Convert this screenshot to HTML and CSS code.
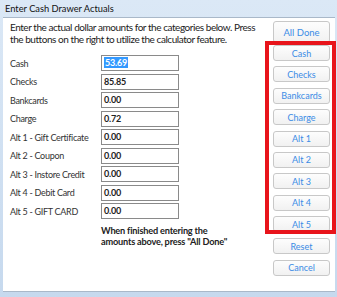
FILE: index.html
```html
<!DOCTYPE html>
<html lang="en">
<head>
<meta charset="UTF-8">
<title>Enter Cash Drawer Actuals</title>
<link rel="stylesheet" href="styles.css">
</head>
<body>

<div class="window">
    <div class="titlebar">Enter Cash Drawer Actuals</div>
    <div class="content">
        <div class="main">
            <p class="intro">Enter the actual dollar amounts for the categories below. Press<br>the buttons on the right to utilize the calculator feature.</p>
            <div class="fields">
                <div class="row"><span class="label">Cash</span><div class="box"><span class="selected">53.69</span></div></div>
                <div class="row"><span class="label">Checks</span><div class="box">85.85</div></div>
                <div class="row"><span class="label">Bankcards</span><div class="box">0.00</div></div>
                <div class="row"><span class="label">Charge</span><div class="box">0.72</div></div>
                <div class="row"><span class="label">Alt 1 - Gift Certificate</span><div class="box">0.00</div></div>
                <div class="row"><span class="label">Alt 2 - Coupon</span><div class="box">0.00</div></div>
                <div class="row"><span class="label">Alt 3 - Instore Credit</span><div class="box">0.00</div></div>
                <div class="row"><span class="label">Alt 4 - Debit Card</span><div class="box">0.00</div></div>
                <div class="row"><span class="label">Alt 5 - GIFT CARD</span><div class="box">0.00</div></div>
            </div>
            <p class="note">When finished entering the<br>amounts above, press "All Done"</p>
        </div>
        <div class="actions">
            <button class="btn done">All Done</button>
            <div class="calc">
                <button class="btn">Cash</button>
                <button class="btn">Checks</button>
                <button class="btn">Bankcards</button>
                <button class="btn">Charge</button>
                <button class="btn">Alt 1</button>
                <button class="btn">Alt 2</button>
                <button class="btn">Alt 3</button>
                <button class="btn">Alt 4</button>
                <button class="btn">Alt 5</button>
            </div>
            <button class="btn reset">Reset</button>
            <button class="btn">Cancel</button>
        </div>
    </div>
    <!-- red annotation frame round the calculator buttons -->
    <div class="highlight"></div>
</div>

</body>
</html>
```

FILE: styles.css
```css
/* window */
body {
    margin: 0;
    font-family: Lato, "Open Sans", sans-serif;
    background: #c9dcf0;
}
.window {
    position: relative;
    width: 337px;
    height: 297px;
    background: linear-gradient(#dbe8f6, #c6d9ee);
    padding: 0 2px 0 3px;
    box-sizing: border-box;
}
.titlebar {
    height: 16px;
    line-height: 17px;
    font-size: 9.3px;
    color: #111;
    padding-left: 2px;
}
.content {
    display: flex;
    height: 273px;
    margin-top: 1px;
    background: #fff;
    border-top: 1px solid #a9b8c9;
    border-bottom: 1px solid #a9b8c9;
}

/* left side */
.main {
    flex: 1;
    padding-left: 7px;
}
.intro {
    margin: 3px 0 0;
    font-size: 10px;
    letter-spacing: -0.45px;
    line-height: 12px;
    white-space: nowrap;
    color: #222;
}
.fields {
    margin-top: 10px;
}
.row {
    display: flex;
    align-items: center;
    height: 16px;
    margin-bottom: 2.5px;
}
.label {
    width: 91px;
    font-size: 9px;
    letter-spacing: -0.3px;
    color: #333;
}
.box {
    width: 74px;
    height: 14px;
    border: 1px solid #8a8a8a;
    font-size: 9px;
    font-weight: bold;
    letter-spacing: -0.2px;
    line-height: 14px;
    padding-left: 2px;
    color: #222;
}
.selected {
    background: #3399ff;
    color: #fff;
    padding: 0 1px;
}
.note {
    margin: 6px 0 0 91px;
    font-size: 9.2px;
    font-weight: bold;
    letter-spacing: -0.2px;
    line-height: 11px;
    color: #222;
}

/* right side buttons */
.actions {
    display: flex;
    flex-direction: column;
    width: 57px;
    padding: 3px 5px 0 0;
}
.btn {
    height: 16px;
    margin-bottom: 5.4px;
    padding: 0;
    font-family: Lato, "Open Sans", sans-serif;
    font-size: 9px;
    color: #3b8ce6;
    background: linear-gradient(#fdfdfd, #f1f1f1);
    border: 1px solid #c8c8c8;
    border-radius: 3px;
}
.done {
    height: 22px;
    margin-bottom: 2px;
    font-size: 9.5px;
}
.calc {
    display: flex;
    flex-direction: column;
}
.reset {
    margin-top: 0.6px;
}
.highlight {
    position: absolute;
    left: 265px;
    top: 41px;
    width: 71px;
    height: 193px;
    border: 4px solid #e8141b;
    box-sizing: border-box;
}
```
